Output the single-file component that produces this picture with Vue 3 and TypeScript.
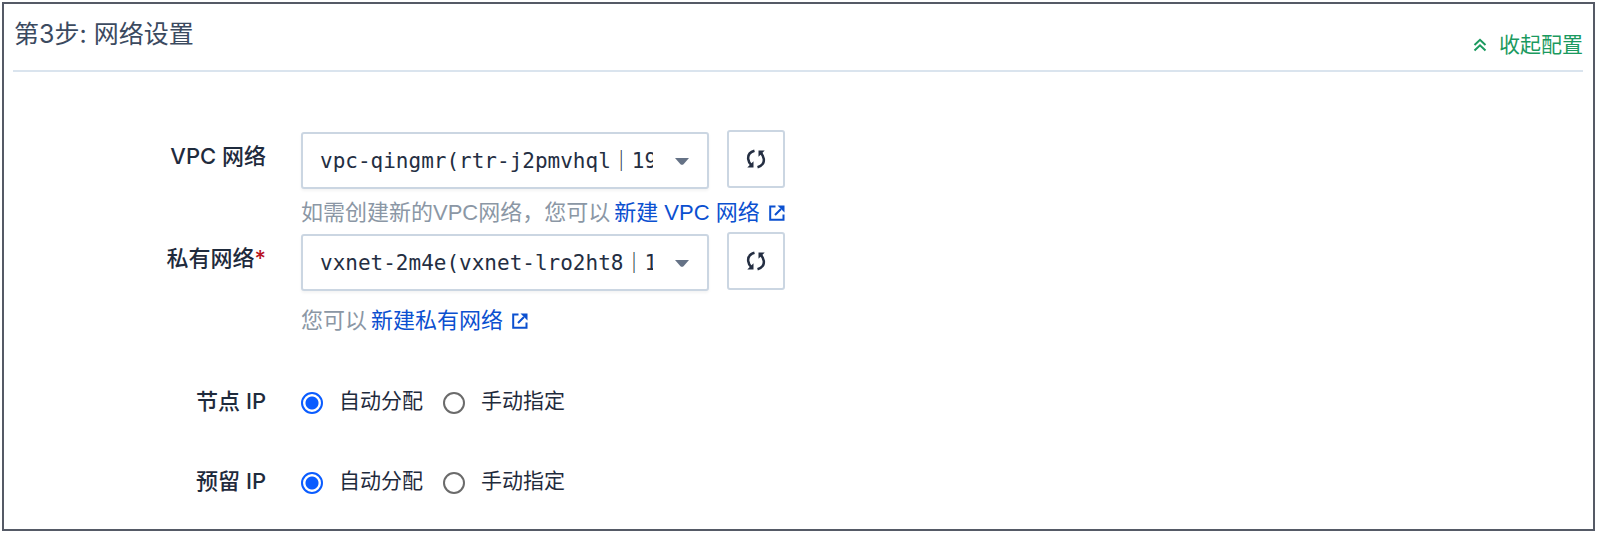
<script setup lang="ts">
import { ref } from 'vue'

interface NetworkField {
  id: string
  label: string
  required: boolean
  value: string
  hint: string
  link: string
}

interface IpField {
  id: string
  label: string
  mode: string
}

const networks = ref<NetworkField[]>([
  {
    id: 'vpc',
    label: 'VPC 网络',
    required: false,
    value: 'vpc-qingmr(rtr-j2pmvhql｜192.168.0.0/16)',
    hint: '如需创建新的VPC网络，您可以',
    link: '新建 VPC 网络',
  },
  {
    id: 'vxnet',
    label: '私有网络',
    required: true,
    value: 'vxnet-2m4e(vxnet-lro2ht8｜192.168.0.0/24)',
    hint: '您可以',
    link: '新建私有网络',
  },
])

const ips = ref<IpField[]>([
  { id: 'node-ip', label: '节点 IP', mode: 'auto' },
  { id: 'reserved-ip', label: '预留 IP', mode: 'auto' },
])

const modes = [
  { value: 'auto', label: '自动分配' },
  { value: 'manual', label: '手动指定' },
]

const expanded = ref(true)
</script>

<template>
  <section class="panel">
    <header class="head">
      <h2 class="title">第3步: 网络设置</h2>
      <button class="toggle" type="button" :aria-expanded="expanded" @click="expanded = !expanded">
        <svg class="chevrons" viewBox="0 0 14 14" aria-hidden="true">
          <path d="M1.5 7 7 1.8 12.500 7M1.500 12.500 7 7.300 12.500 12.500" />
        </svg>
        <span>收起配置</span>
      </button>
    </header>

    <form v-show="expanded" class="form" @submit.prevent>
      <div v-for="n in networks" :key="n.id" class="row network">
        <label class="label" :for="n.id">{{ n.label }}<span v-if="n.required" class="star">*</span></label>
        <div class="field">
          <div class="controls">
            <div class="picker">
              <select :id="n.id" class="select">
                <option>{{ n.value }}</option>
              </select>
              <svg class="caret" viewBox="0 0 14 7" aria-hidden="true"><path d="M0 0h14L8.500 6.200q-1.500 1.200-3 0z" /></svg>
            </div>
            <button class="refresh" type="button" aria-label="刷新">
              <svg viewBox="0 0 20 20" aria-hidden="true">
                <path class="arc" d="M8.500 1.800C4.200 3 1.800 6.200 2.200 10c.3 2.600 1.300 4.600 3.300 6.300M11.500 18.200c4.300-1.200 6.700-4.400 6.300-8.200-.3-2.600-1.300-4.600-3.300-6.300" />
                <path d="M1.300 18.500h6.200v-6.200zM18.700 1.500h-6.200v6.200z" />
              </svg>
            </button>
          </div>
          <p class="hint">
            <span>{{ n.hint }}</span>
            <a class="link" href="#">
              <span>{{ n.link }}</span>
              <svg viewBox="0 0 16 16" aria-hidden="true">
                <path class="line" d="M6.500 1.500H1.200v13.300h13.300V9.500M6 10l6-6" />
                <path d="M8.500 .500h7v7z" />
              </svg>
            </a>
          </p>
        </div>
      </div>

      <div v-for="ip in ips" :key="ip.id" class="row ip" role="radiogroup" :aria-labelledby="ip.id">
        <span :id="ip.id" class="label">{{ ip.label }}</span>
        <div class="radios">
          <label v-for="m in modes" :key="m.value" class="option">
            <input v-model="ip.mode" class="radio" type="radio" :name="ip.id" :value="m.value" />
            <span>{{ m.label }}</span>
          </label>
        </div>
      </div>
    </form>
  </section>
</template>

<style>
body {
  background: #fff;
}
</style>

<style scoped>
.panel {
  margin: 2px 3px 3px 2px;
  padding: 0 10px 33px 9px;
  border: 2px solid #555a66;
  font-family: "Liberation Sans", "Noto Sans CJK SC", sans-serif;
  font-size: 22px;
  line-height: 30px;
  color: #1f2b3d;
}

.head {
  display: flex;
  justify-content: space-between;
  align-items: flex-end;
  height: 66px;
  border-bottom: 2px solid #dae4ee;
}

.title {
  margin: 0;
  align-self: flex-start;
  padding: 12px 0 0 1px;
  font-family: Inter, "Noto Sans CJK SC", sans-serif;
  font-size: 25px;
  line-height: 36px;
  font-weight: 400;
  color: #3b4a5f;
}

.toggle {
  display: flex;
  align-items: center;
  gap: 12px;
  margin: 0 0 10px;
  padding: 0;
  border: 0;
  background: none;
  font: inherit;
  font-size: 21px;
  color: #1b9a5f;
  cursor: pointer;
}

.chevrons {
  width: 14px;
  height: 14px;
  fill: none;
  stroke: currentColor;
  stroke-width: 2;
}

.form {
  padding-top: 58px;
}

.row {
  display: grid;
  grid-template-columns: 253px minmax(0, 1fr);
  column-gap: 35px;
}

.label {
  text-align: right;
  font-family: Inter, "Noto Sans CJK SC", sans-serif;
  font-weight: 500;
}

.network {
  height: 102px;
}

.network .label {
  padding-top: 11px;
}

.star {
  color: #b8141f;
}

.controls {
  display: flex;
  gap: 18px;
}

.picker {
  position: relative;
  width: 408px;
  margin-top: 2px;
}

.select {
  display: block;
  width: 100%;
  height: 57px;
  padding: 0 54px 0 17px;
  border: 2px solid #cbd6e2;
  border-radius: 3px;
  background: #fff;
  box-shadow: 0 2px 3px #0000000c;
  appearance: none;
  font-family: "DejaVu Sans Mono", "Noto Sans CJK SC", monospace;
  font-size: 21px;
  color: #242e42;
}

.caret {
  position: absolute;
  right: 20px;
  top: 26px;
  width: 14px;
  height: 7px;
  fill: #657286;
  pointer-events: none;
}

.refresh {
  display: grid;
  place-items: center;
  width: 58px;
  height: 58px;
  padding: 0;
  border: 2px solid #cbd6e2;
  border-radius: 3px;
  background: #fff;
  cursor: pointer;
}

.refresh svg {
  width: 20px;
  height: 20px;
  fill: #242e42;
}

.refresh .arc {
  fill: none;
  stroke: #242e42;
  stroke-width: 2.5;
}

.hint {
  display: flex;
  gap: 4px;
  margin: 9px 0 0;
  color: #8b97a5;
}

.network + .network .hint {
  margin-top: 15px;
}

.link {
  display: flex;
  align-items: center;
  gap: 9px;
  color: #0b50d0;
  text-decoration: none;
}

.link svg {
  width: 16px;
  height: 16px;
  fill: currentColor;
}

.link .line {
  fill: none;
  stroke: currentColor;
  stroke-width: 2;
}

.ip {
  margin-top: 50px;
}

.network + .ip {
  margin-top: 52px;
}

.radios,
.option {
  display: flex;
  align-items: center;
}

.radios {
  gap: 20px;
  font-size: 21px;
}

.option {
  gap: 16px;
}

.radio {
  width: 22px;
  height: 22px;
  margin: 4px 0 0;
  border: 2px solid #6b6b6b;
  border-radius: 50%;
  background: #fff;
  appearance: none;
}

.radio:checked {
  border-color: #0a5cff;
  background: radial-gradient(circle, #0a5cff 6px, #fff 7px);
}
</style>
